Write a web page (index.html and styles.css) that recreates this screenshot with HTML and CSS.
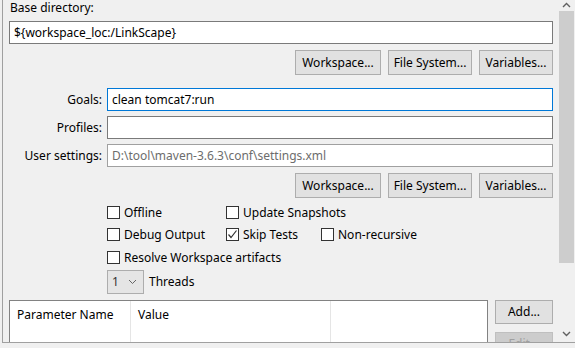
FILE: index.html
```html
<!DOCTYPE html>
<html lang="en">
<head>
    <meta charset="UTF-8">
    <title>Maven Run Configuration</title>
    <link rel="stylesheet" href="styles.css">
</head>
<body>
    <div class="panel">
        <div class="content">
            <div class="label-top">Base directory:</div>
            <div class="field">${workspace_loc:/LinkScape}</div>
            <div class="btn-row">
                <button class="btn btn-ws">Workspace...</button>
                <button class="btn btn-fs">File System...</button>
                <button class="btn btn-var">Variables...</button>
            </div>

            <!-- goals / profiles / settings -->
            <div class="form-grid">
                <label>Goals:</label>
                <div class="field focus">clean tomcat7:run</div>
                <label>Profiles:</label>
                <div class="field"></div>
                <label>User settings:</label>
                <div class="field disabled">D:\tool\maven-3.6.3\conf\settings.xml</div>
            </div>
            <div class="btn-row">
                <button class="btn btn-ws">Workspace...</button>
                <button class="btn btn-fs">File System...</button>
                <button class="btn btn-var">Variables...</button>
            </div>

            <!-- options -->
            <div class="options">
                <div class="check"><span class="box"></span>Offline</div>
                <div class="check span2"><span class="box"></span>Update Snapshots</div>
                <div class="check"><span class="box"></span>Debug Output</div>
                <div class="check"><span class="box"><svg width="11" height="11" viewBox="0 0 11 11"><polyline points="1.5,5.5 4,8.5 9.5,1.5" fill="none" stroke="#333" stroke-width="1.2"/></svg></span>Skip Tests</div>
                <div class="check"><span class="box"></span>Non-recursive</div>
                <div class="check span3"><span class="box"></span>Resolve Workspace artifacts</div>
            </div>
            <div class="threads">
                <div class="combo">
                    <span>1</span>
                    <svg width="9" height="6" viewBox="0 0 9 6"><polyline points="1,1 4.5,4.5 8,1" fill="none" stroke="#666" stroke-width="1"/></svg>
                </div>
                <span>Threads</span>
            </div>

            <!-- parameters -->
            <div class="params">
                <div class="table">
                    <div class="col col-name">Parameter Name</div>
                    <div class="col col-value">Value</div>
                    <div class="col col-rest"></div>
                </div>
                <div class="side-btns">
                    <button class="btn btn-side">Add...</button>
                    <button class="btn btn-side off">Edit...</button>
                </div>
            </div>
        </div>
        <div class="scrollbar">
            <svg class="arrow" width="9" height="6" viewBox="0 0 9 6"><polyline points="1,5 4.5,1.5 8,5" fill="none" stroke="#606060" stroke-width="1.4"/></svg>
            <div class="thumb"></div>
            <svg class="arrow down" width="9" height="6" viewBox="0 0 9 6"><polyline points="1,1 4.5,4.5 8,1" fill="none" stroke="#606060" stroke-width="1.4"/></svg>
        </div>
    </div>
</body>
</html>
```

FILE: styles.css
```css
body {
    margin: 0;
    background: #f0f0f0;
    font-family: "Noto Sans", "Open Sans", sans-serif;
    font-size: 12px;
    color: #000;
    width: 575px;
    height: 348px;
    overflow: hidden;
}

.panel {
    display: flex;
    box-sizing: border-box;
    height: 343px;
    margin-left: 2px;
    border-left: 1px solid #a0a0a0;
    border-bottom: 1px solid #a0a0a0;
    overflow: hidden;
}

.content {
    flex: none;
    width: 544px;
    padding-left: 6px;
    padding-right: 5px;
    overflow: hidden;
}

.label-top {
    line-height: 16px;
    padding-left: 1px;
    margin-bottom: 5px;
}

.field {
    box-sizing: border-box;
    height: 23px;
    line-height: 21px;
    border: 1px solid #7a7a7a;
    background: #fff;
    padding: 0 4px;
    white-space: nowrap;
    overflow: hidden;
}

.field.focus {
    border-color: #0078d7;
}

.field.disabled {
    border-color: #a0a0a0;
    color: #6d6d6d;
}

.btn-row {
    display: flex;
    justify-content: flex-end;
    gap: 7px;
    margin-top: 6px;
}

.btn {
    box-sizing: border-box;
    height: 25px;
    padding: 0;
    font: inherit;
    color: #000;
    background: #e1e1e1;
    border: 1px solid #adadad;
}

.btn-ws { width: 86px; }
.btn-fs { width: 84px; }
.btn-var { width: 74px; }

.form-grid {
    display: grid;
    grid-template-columns: 93px 1fr;
    column-gap: 5px;
    row-gap: 5px;
    margin-top: 13px;
}

.form-grid label {
    text-align: right;
    line-height: 23px;
}

.options {
    display: grid;
    grid-template-columns: 119px 95px 1fr;
    grid-auto-rows: 22.5px;
    margin: 3px 0 0 98px;
}

.check {
    display: flex;
    align-items: center;
    white-space: nowrap;
}

.span2 { grid-column: span 2; }
.span3 { grid-column: span 3; }

.box {
    box-sizing: border-box;
    width: 13px;
    height: 13px;
    border: 1px solid #333;
    background: #fff;
    margin-right: 4px;
    display: flex;
    align-items: center;
    justify-content: center;
}

.threads {
    display: flex;
    align-items: center;
    gap: 5px;
    margin: 1px 0 0 98px;
}

.combo {
    box-sizing: border-box;
    width: 37px;
    height: 24px;
    background: #e5e5e5;
    border: 1px solid #adadad;
    display: flex;
    align-items: center;
    justify-content: space-between;
    padding: 0 6px 0 4px;
    color: #333;
}

.params {
    display: flex;
    gap: 7px;
    margin-top: 6px;
}

.table {
    box-sizing: border-box;
    width: 480px;
    height: 60px;
    background: #fff;
    border: 1px solid #828282;
    display: flex;
}

.col {
    padding: 6px 7px;
    line-height: 16px;
    border-right: 1px solid #e5e5e5;
}

.col-name { width: 106px; }
.col-value { width: 185px; }
.col-rest { flex: 1; border-right: none; }

.side-btns {
    display: flex;
    flex-direction: column;
    gap: 8px;
}

.btn-side {
    width: 58px;
    height: 24px;
}

.btn-side.off {
    color: #a0a0a0;
    background: #cccccc;
    border-color: #bfbfbf;
}

.scrollbar {
    flex: none;
    width: 17px;
    display: flex;
    flex-direction: column;
    align-items: center;
}

.arrow {
    margin-top: 2px;
    flex: none;
}

.thumb {
    flex: none;
    width: 15px;
    height: 252px;
    margin-top: 3px;
    background: #cdcdcd;
}

.arrow.down {
    margin-top: auto;
    margin-bottom: 5px;
}
```
